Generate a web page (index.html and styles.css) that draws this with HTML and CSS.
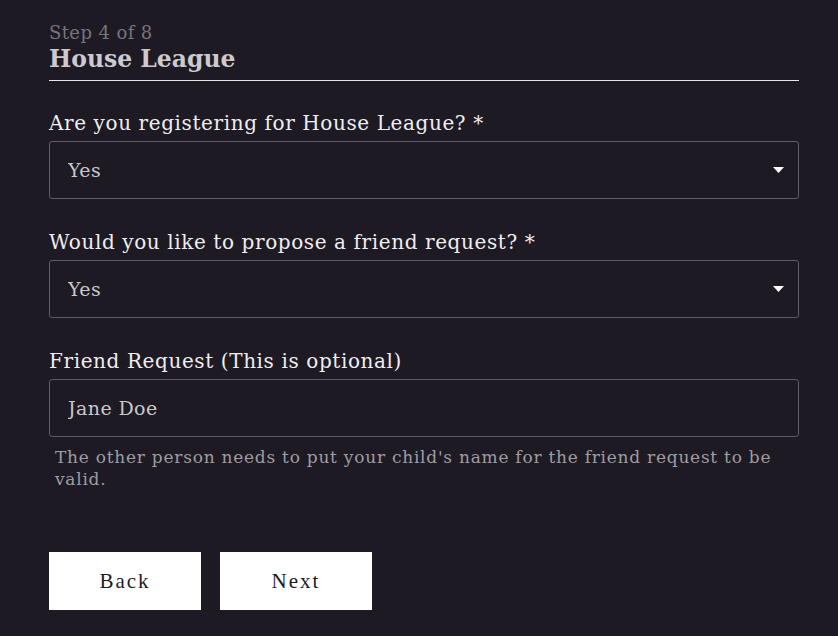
FILE: index.html
```html
<!DOCTYPE html>
<html lang="en">

<head>
    <meta charset="UTF-8">
    <meta name="viewport" content="width=device-width, initial-scale=1.0">
    <title>Registration - House League</title>
    <link rel="stylesheet" href="styles.css">
</head>

<body>
    <form class="step-form">
        <div class="step-head">
            <div class="step-count">Step 4 of 8</div>
            <h2 class="step-title">House League</h2>
        </div>

        <div class="field">
            <label for="houseLeague">Are you registering for House League? *</label>
            <div class="select-wrap">
                <select id="houseLeague" name="houseLeague">
                    <option>Yes</option>
                    <option>No</option>
                </select>
                <svg class="caret" width="11" height="6" viewBox="0 0 11 6"><path d="M0 0h11L5.5 6z" fill="#fff"/></svg>
            </div>
        </div>

        <div class="field">
            <label for="friendRequest">Would you like to propose a friend request? *</label>
            <div class="select-wrap">
                <select id="friendRequest" name="friendRequest">
                    <option>Yes</option>
                    <option>No</option>
                </select>
                <svg class="caret" width="11" height="6" viewBox="0 0 11 6"><path d="M0 0h11L5.5 6z" fill="#fff"/></svg>
            </div>
        </div>

        <div class="field">
            <label for="friendName">Friend Request (This is optional)</label>
            <input type="text" id="friendName" name="friendName" value="Jane Doe">
            <div class="help">The other person needs to put your child's name for the friend request to be valid.</div>
        </div>

        <div class="buttons">
            <button type="button">Back</button>
            <button type="submit">Next</button>
        </div>
    </form>
</body>

</html>
```

FILE: styles.css
```css
body {
    margin: 0;
    background-color: #1d1a23;
    font-family: "DejaVu Serif", serif;
}

.step-form {
    width: 750px;
    margin: 0 0 0 49px;
    padding-top: 22px;
}

.step-head {
    border-bottom: 1px solid #e6e4e8;
    padding-bottom: 6px;
    margin-bottom: 30px;
}

.step-count {
    color: #78747d;
    font-size: 18px;
    letter-spacing: 0.4px;
    line-height: 22px;
}

.step-title {
    margin: 0;
    color: #cdc9d0;
    font-size: 23.5px;
    line-height: 30px;
}

.field {
    margin-bottom: 31px;
}

label {
    display: block;
    color: #efedf1;
    font-size: 20px;
    letter-spacing: 0.6px;
    line-height: 24px;
    margin-bottom: 6px;
}

.select-wrap {
    position: relative;
}

select,
input[type="text"] {
    display: block;
    width: 100%;
    height: 58px;
    box-sizing: border-box;
    padding: 0 18px;
    background-color: #1d1a23;
    border: 1px solid #5f5c65;
    border-radius: 3px;
    color: #cac7cd;
    font-family: "DejaVu Serif", serif;
    font-size: 19px;
    letter-spacing: 0.4px;
    appearance: none;
    -webkit-appearance: none;
    outline: none;
}

.caret {
    position: absolute;
    right: 15px;
    top: 26px;
}

.help {
    color: #9f9ca4;
    font-size: 17px;
    letter-spacing: 0.75px;
    line-height: 22px;
    margin-top: 9px;
    padding-left: 6px;
}

.buttons {
    display: flex;
    gap: 19px;
    margin-top: 62px;
}

button {
    width: 152px;
    height: 58px;
    background-color: #ffffff;
    color: #1d1a23;
    border: none;
    font-family: "Liberation Serif", serif;
    font-size: 21px;
    letter-spacing: 2px;
}
```
